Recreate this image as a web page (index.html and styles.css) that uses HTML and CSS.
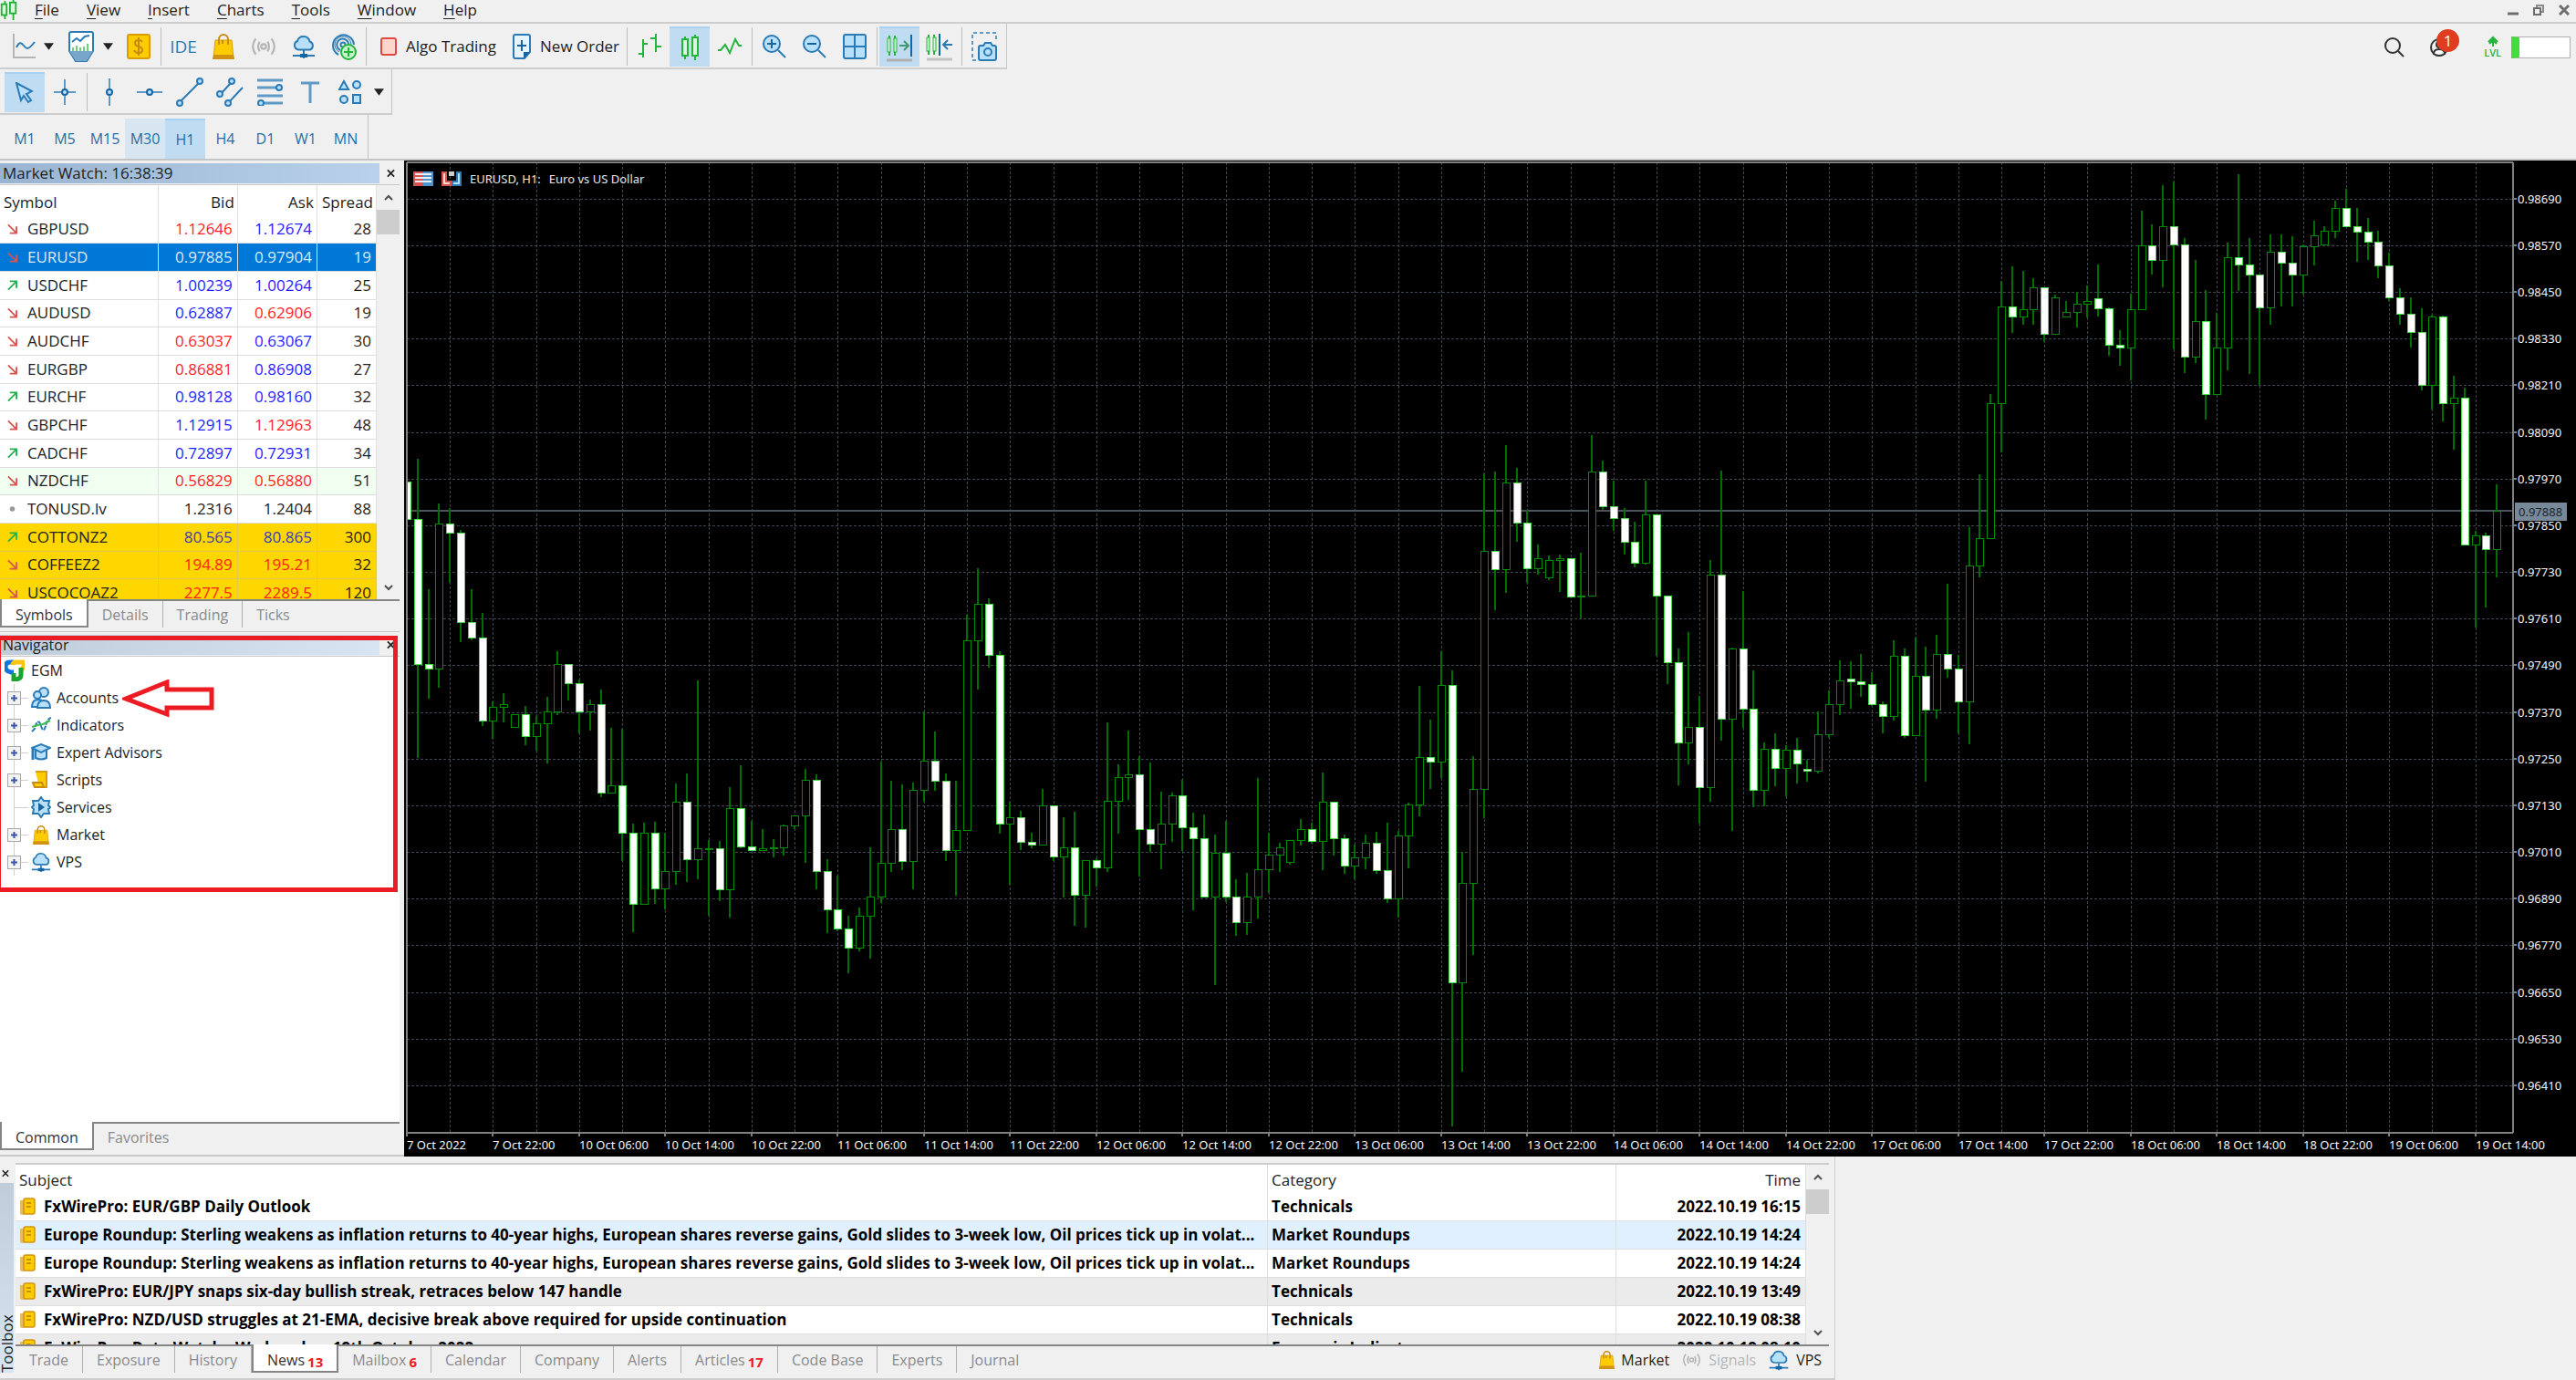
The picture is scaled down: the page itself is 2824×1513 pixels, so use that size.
FILE: index.html
```html
<!DOCTYPE html>
<html lang="en">
<head>
  <meta charset="UTF-8" />
  <meta name="viewport" content="width=device-width, initial-scale=1.0" />
  <title>EURUSD, H1</title>
  <link rel="stylesheet" href="styles.css">
</head>
<body>
  <!-- Shared icons -->
  <svg class="sprite" aria-hidden="true">
    <symbol id="i-bag" viewBox="0 0 24 28">
      <path d="M7 10V6a5 5 0 0 1 10 0v4" fill="none" stroke="#c98a10" stroke-width="2"/>
      <path d="M3 7h18l2 20H1z" fill="#fccb00" stroke="#d99c0a" stroke-width="1"/>
      <path d="M1 23h22l1 5H0z" fill="#d29314"/>
      <path d="M7 7v5M11 7v4M17 7v5" stroke="#c98a10" stroke-width="2"/>
    </symbol>
    <symbol id="i-cloud" viewBox="0 0 26 28">
      <path d="M7 17.500a5 5 0 0 1-1-9.500A7 7 0 0 1 19.500 8.500 4.800 4.800 0 0 1 20 17.500z" fill="#b9e0fb" stroke="#2a7ab5" stroke-width="2"/>
      <path d="M13 18v9M1 24h24" stroke="#2a7ab5" stroke-width="2"/>
      <path d="M9 24h8" stroke="#1565a5" stroke-width="4"/>
    </symbol>
    <symbol id="i-signal" viewBox="0 0 26 20">
      <g fill="none" stroke="#b4b4b4" stroke-width="2">
        <circle cx="13" cy="10" r="2.500"/>
        <path d="M9 5q-3 5 0 10M17 5q3 5 0 10M5 2q-6 8 0 16M21 2q6 8 0 16"/>
      </g>
    </symbol>
    <symbol id="i-down" viewBox="0 0 12 12">
      <path d="M1 1l9 9M11 3v8H3" fill="none" stroke="#d9534f" stroke-width="2"/>
    </symbol>
    <symbol id="i-up" viewBox="0 0 12 12">
      <path d="M1 11l9-9M3 1h8v8" fill="none" stroke="#22b14c" stroke-width="2"/>
    </symbol>
    <symbol id="i-dot" viewBox="0 0 12 12"><circle cx="6" cy="6" r="3" fill="#999"/></symbol>
    <symbol id="i-news" viewBox="0 0 18 20">
      <path d="M1 3h5v16H3a2 2 0 0 1-2-2z" fill="#e3bb62"/>
      <rect x="5" y="1" width="12" height="17" rx="2" fill="#fccb00" stroke="#d29314" stroke-width="1.500"/>
      <path d="M8 6h5M8 10h5" stroke="#b57f10" stroke-width="1.500"/>
    </symbol>
    <symbol id="i-close" viewBox="0 0 10 10"><path d="M1 1l8 8M9 1L1 9" stroke="#222" stroke-width="2"/></symbol>
    <symbol id="i-plus" viewBox="0 0 23 15">
      <rect x=".5" y=".5" width="14" height="14" fill="#f3f3f3" stroke="#a8a8a8"/>
      <path d="M4 7.500h7M7.500 4v7" stroke="#3a55a8" stroke-width="2"/>
      <path d="M15 7.500h8" stroke="#d0d0d0"/>
    </symbol>
    <symbol id="i-branch" viewBox="0 0 23 15"><path d="M8 7.500h15" stroke="#d0d0d0"/></symbol>
    <symbol id="i-chev-up" viewBox="0 0 10 8"><path d="M1 6l4-4 4 4" fill="none" stroke="#505050" stroke-width="2"/></symbol>
    <symbol id="i-chev-down" viewBox="0 0 10 8"><path d="M1 2l4 4 4-4" fill="none" stroke="#505050" stroke-width="2"/></symbol>
    <symbol id="i-caret" viewBox="0 0 12 8"><path d="M0 0h12L6 8z" fill="#222"/></symbol>
  </svg>

  <div class="terminal">
    <header class="menubar">
      <svg class="app-logo" viewBox="0 0 20 24"><g fill="#dcf5dc" stroke="#1eb432" stroke-width="2"><path d="M5 1v22M15 0v24"/><rect x="1" y="5" width="6" height="13"/><rect x="11" y="3" width="7" height="13"/></g></svg>
      <nav class="menu">
        <a href="#file"><u>F</u>ile</a>
        <a href="#view"><u>V</u>iew</a>
        <a href="#insert"><u>I</u>nsert</a>
        <a href="#charts"><u>C</u>harts</a>
        <a href="#tools"><u>T</u>ools</a>
        <a href="#window"><u>W</u>indow</a>
        <a href="#help"><u>H</u>elp</a>
      </nav>
      <div class="window-buttons">
        <button aria-label="Minimize"><svg width="12" height="12"><path d="M0 10h12" stroke="#6e6e6e" stroke-width="3"/></svg></button>
        <button aria-label="Restore"><svg width="12" height="12"><path d="M4 3V1h7v7H9" fill="none" stroke="#8a8a8a" stroke-width="2"/><rect x="1" y="4" width="7" height="7" fill="none" stroke="#6e6e6e" stroke-width="2"/></svg></button>
        <button aria-label="Close"><svg width="12" height="12"><path d="M1 1l10 10M11 1L1 11" stroke="#6e6e6e" stroke-width="3"/></svg></button>
      </div>
    </header>

    <div class="toolbar-row">
      <div class="toolbar">
        <button class="tool wide first" aria-label="New chart">
          <svg width="28" height="30"><path d="M2 1v26h24" fill="none" stroke="#b4b4b4" stroke-width="2"/><path d="M5 16c3-6 5-6 8-2s5 5 12-4" fill="none" stroke="#2a7ab5" stroke-width="2"/></svg>
          <svg class="caret"><use href="#i-caret"/></svg>
        </button>
        <button class="tool wide" aria-label="Profiles">
          <svg width="30" height="34"><path d="M2 3q0-2 2-2h22q2 0 2 2v19l-7 11H9L2 22z" fill="#fff" stroke="#2a7ab5" stroke-width="2"/><path d="M2 22h26l-7 11H9z" fill="#78a5ca"/><path d="M5 12l5-4 4 3 5-5 5-1" fill="none" stroke="#2a7ab5" stroke-width="2"/><path d="M6 22v-4M10 22v-6M14 22v-4M18 22v-5M22 22v-8" stroke="#6fcf7c" stroke-width="2"/></svg>
          <svg class="caret"><use href="#i-caret"/></svg>
        </button>
        <button class="tool" aria-label="Market watch">
          <svg width="28" height="30"><rect x="2" y="2" width="24" height="26" rx="2" fill="#fccb00" stroke="#d99c0a" stroke-width="2"/><path d="M18 10q-1-2-4-2-4 0-4 3t4 4 4 4-4 3q-4 0-5-3M14 5v20" fill="none" stroke="#c98a10" stroke-width="2"/></svg>
        </button>
        <span class="sep"></span>
        <button class="tool ide">IDE</button>
        <button class="tool" aria-label="Market"><svg width="24" height="28"><use href="#i-bag"/></svg></button>
        <button class="tool" aria-label="Signals"><svg width="28" height="22"><use href="#i-signal"/></svg></button>
        <button class="tool" aria-label="VPS"><svg width="26" height="28"><use href="#i-cloud"/></svg></button>
        <button class="tool" aria-label="Connect">
          <svg width="30" height="32"><g fill="none" stroke="#2a7ab5" stroke-width="2"><circle cx="14" cy="14" r="2.500"/><path d="M11 20a6.500 6.500 0 1 1 9-4M9 25A11.500 11.500 0 1 1 26 14" /><path d="M10 22a9 9 0 1 1 13-8" stroke-width="1"/></g><circle cx="20" cy="22" r="8" fill="#c6f5cc" stroke="#22b53a" stroke-width="2"/><path d="M20 17v10M15 22h10" stroke="#22b53a" stroke-width="2"/></svg>
        </button>
        <span class="sep"></span>
        <button class="tool labelled"><svg width="18" height="20"><rect x="1" y="1" width="16" height="18" rx="2" fill="#ffd5cc" stroke="#dc4a41" stroke-width="2"/></svg>Algo Trading</button>
        <button class="tool labelled"><svg width="20" height="30"><path d="M3 2h14q2 0 2 2v17l-6 7H3q-2 0-2-2V4q0-2 2-2z" fill="#e6f4ff" stroke="#2a7ab5" stroke-width="2"/><path d="M12 28v-7h7z" fill="#1565a5"/><path d="M10 8v12M5 14h10" stroke="#1565a5" stroke-width="2"/></svg>New Order</button>
        <span class="sep"></span>
        <button class="tool" aria-label="Bar chart"><svg width="28" height="30"><path d="M7 7v20M7 12h5M2 23h5M21 1v20M15 6h6M21 15h6" stroke="#22b53a" stroke-width="2" fill="none"/></svg></button>
        <button class="tool active" aria-label="Candlesticks"><svg width="22" height="30"><g fill="#d6fadb" stroke="#22b53a" stroke-width="2"><path d="M6 3v25M17 1v28"/><rect x="3" y="6" width="6" height="18"/><rect x="14" y="4" width="6" height="20"/></g></svg></button>
        <button class="tool" aria-label="Line chart"><svg width="28" height="20"><path d="M1 14h3l5-6 5 9 6-15 4 7h3" fill="none" stroke="#22b53a" stroke-width="2"/></svg></button>
        <span class="sep"></span>
        <button class="tool" aria-label="Zoom in"><svg width="28" height="30"><circle cx="11" cy="12" r="9" fill="#b9e0fb" stroke="#2a7ab5" stroke-width="2"/><path d="M18 19l8 8" stroke="#2a7ab5" stroke-width="2"/><path d="M6 12h10M11 7v10" stroke="#1565a5" stroke-width="2"/></svg></button>
        <button class="tool" aria-label="Zoom out"><svg width="28" height="30"><circle cx="11" cy="12" r="9" fill="#b9e0fb" stroke="#2a7ab5" stroke-width="2"/><path d="M18 19l8 8" stroke="#2a7ab5" stroke-width="2"/><path d="M6 12h10" stroke="#1565a5" stroke-width="2"/></svg></button>
        <button class="tool" aria-label="Tile windows"><svg width="26" height="30"><rect x="1" y="2" width="24" height="26" rx="2" fill="#b9e0fb" stroke="#2a7ab5" stroke-width="2"/><path d="M13 2v26M1 15h24" stroke="#2a7ab5" stroke-width="2"/></svg></button>
        <span class="sep"></span>
        <button class="tool active" aria-label="Auto scroll"><svg width="30" height="32"><g fill="#d6fadb" stroke="#22b53a"><path d="M4 3v22M10 3v22" stroke-width="2"/><rect x="2" y="6" width="3" height="15"/><rect x="9" y="6" width="3" height="15"/></g><path d="M15 14h10M20 9l5 5-5 5" fill="none" stroke="#3f9a6e" stroke-width="2"/><path d="M28 2v24" stroke="#1565a5" stroke-width="2"/><path d="M1 30h28" stroke="#b0b0b0" stroke-width="3"/></svg></button>
        <button class="tool" aria-label="Chart shift"><svg width="30" height="32"><g fill="#d6fadb" stroke="#22b53a"><path d="M3 3v22M9 3v22" stroke-width="2"/><rect x="1" y="6" width="3" height="15"/><rect x="8" y="6" width="3" height="15"/></g><path d="M29 14H20M24 9l-5 5 5 5" fill="none" stroke="#2a7ab5" stroke-width="2"/><path d="M15 2v24" stroke="#1565a5" stroke-width="2"/><path d="M1 30h28" stroke="#c4c4c4" stroke-width="3"/></svg></button>
        <span class="sep"></span>
        <button class="tool" aria-label="Screenshot"><svg width="30" height="34"><path d="M6 32H2V2h26v10" fill="none" stroke="#5f9ac6" stroke-width="2" stroke-dasharray="4 3"/><path d="M9 18q0-2 2-2h3l2-3h6l2 3h2q2 0 2 2v12q0 2-2 2H11q-2 0-2-2z" fill="#b9e0fb" stroke="#2a7ab5" stroke-width="2"/><circle cx="19" cy="23" r="4" fill="none" stroke="#2a7ab5" stroke-width="2"/></svg></button>
      </div>
      <div class="status">
        <button class="status-button" aria-label="Search"><svg width="22" height="22"><circle cx="9" cy="9" r="8" fill="none" stroke="#333" stroke-width="2"/><path d="M15 15l6 6" stroke="#333" stroke-width="2"/></svg></button>
        <button class="status-button account" aria-label="Account"><svg width="22" height="22"><circle cx="11" cy="11" r="9" fill="none" stroke="#333" stroke-width="2"/><circle cx="11" cy="8" r="3" fill="none" stroke="#333" stroke-width="2"/><path d="M5 18q0-5 6-5t6 5q-6 4-12 0z" fill="#fff" stroke="#333" stroke-width="2"/></svg><span class="badge">1</span></button>
        <div class="level"><svg width="14" height="12"><path d="M7 12V2M2 7l5-5 5 5M3 9l4-4 4 4" fill="none" stroke="#22b53a" stroke-width="2"/></svg><span>LVL</span></div>
        <div class="traffic"></div>
      </div>
    </div>

    <div class="toolbar-row second">
      <div class="toolbar inset">
        <button class="tool active" aria-label="Cursor"><svg width="20" height="24"><path d="M1 1l17 9-6 3 5 7-3 2-5-7-3 5z" fill="#b9e0fb" stroke="#2a7ab5" stroke-width="2"/></svg></button>
        <button class="tool" aria-label="Crosshair"><svg width="26" height="30"><path d="M13 1v28M1 15h24" stroke="#5f9ac6" stroke-width="2"/><circle cx="13" cy="15" r="3" fill="#b9e0fb" stroke="#1565a5" stroke-width="2"/></svg></button>
        <span class="sep"></span>
        <button class="tool" aria-label="Vertical line"><svg width="26" height="30"><path d="M13 0v30" stroke="#5f9ac6" stroke-width="2"/><circle cx="13" cy="15" r="3" fill="#b9e0fb" stroke="#1565a5" stroke-width="2"/></svg></button>
        <button class="tool" aria-label="Horizontal line"><svg width="28" height="30"><path d="M0 15h28" stroke="#5f9ac6" stroke-width="2"/><circle cx="14" cy="15" r="3" fill="#b9e0fb" stroke="#1565a5" stroke-width="2"/></svg></button>
        <button class="tool" aria-label="Trendline"><svg width="32" height="32"><path d="M5 27L27 5" stroke="#2a7ab5" stroke-width="2"/><g fill="#b9e0fb" stroke="#2a7ab5" stroke-width="2"><circle cx="5" cy="28" r="3"/><circle cx="27" cy="4" r="3"/></g></svg></button>
        <button class="tool" aria-label="Equidistant channel"><svg width="30" height="32"><path d="M4 19L17 5M13 28L29 11" stroke="#2a7ab5" stroke-width="2"/><g fill="#b9e0fb" stroke="#2a7ab5" stroke-width="2"><circle cx="4" cy="18" r="3"/><circle cx="17" cy="4" r="3"/><circle cx="13" cy="28" r="3"/></g></svg></button>
        <button class="tool" aria-label="Fibonacci retracement"><svg width="28" height="30"><path d="M0 2h28M0 10h24M0 19h28M4 27h24" stroke="#5f9ac6" stroke-width="3"/><g fill="#b9e0fb" stroke="#2a7ab5" stroke-width="2"><circle cx="24" cy="10" r="3"/><circle cx="4" cy="27" r="3"/></g></svg></button>
        <button class="tool" aria-label="Text"><svg width="20" height="24"><path d="M0 2h20M10 2v22" stroke="#5f9ac6" stroke-width="3"/></svg></button>
        <button class="tool wide" aria-label="Objects"><svg width="26" height="28"><g fill="#b9e0fb" stroke="#2a7ab5" stroke-width="2"><path d="M6 2l5 9H1z"/><circle cx="20" cy="6" r="4"/><circle cx="6" cy="22" r="4"/><rect x="16" y="17" width="8" height="9"/></g></svg><svg class="caret"><use href="#i-caret"/></svg></button>
      </div>
    </div>

    <div class="toolbar-row third">
      <div class="toolbar inset">
        <button class="tool period">M1</button>
        <button class="tool period">M5</button>
        <button class="tool period">M15</button>
        <button class="tool period hover">M30</button>
        <button class="tool period active">H1</button>
        <button class="tool period">H4</button>
        <button class="tool period">D1</button>
        <button class="tool period">W1</button>
        <button class="tool period">MN</button>
      </div>
    </div>

    <main class="workspace">
      <aside class="sidebar">
        <section class="panel market-watch">
          <div class="panel-title">
            <h2>Market Watch: 16:38:39</h2>
            <button class="close" aria-label="Close Market Watch"><svg width="9" height="10"><use href="#i-close"/></svg></button>
          </div>
          <div class="panel-body">
            <div class="table-clip">
              <table class="quotes">
                <thead>
                  <tr><th class="symbol">Symbol</th><th>Bid</th><th>Ask</th><th class="spread">Spread</th></tr>
                </thead>
                <tbody>
                  <tr><td><svg><use href="#i-down"/></svg>GBPUSD</td><td class="down">1.12646</td><td class="up">1.12674</td><td>28</td></tr>
                  <tr class="selected"><td><svg><use href="#i-down"/></svg>EURUSD</td><td>0.97885</td><td>0.97904</td><td>19</td></tr>
                  <tr><td><svg><use href="#i-up"/></svg>USDCHF</td><td class="up">1.00239</td><td class="up">1.00264</td><td>25</td></tr>
                  <tr><td><svg><use href="#i-down"/></svg>AUDUSD</td><td class="up">0.62887</td><td class="down">0.62906</td><td>19</td></tr>
                  <tr><td><svg><use href="#i-down"/></svg>AUDCHF</td><td class="down">0.63037</td><td class="up">0.63067</td><td>30</td></tr>
                  <tr><td><svg><use href="#i-down"/></svg>EURGBP</td><td class="down">0.86881</td><td class="up">0.86908</td><td>27</td></tr>
                  <tr><td><svg><use href="#i-up"/></svg>EURCHF</td><td class="up">0.98128</td><td class="up">0.98160</td><td>32</td></tr>
                  <tr><td><svg><use href="#i-down"/></svg>GBPCHF</td><td class="up">1.12915</td><td class="down">1.12963</td><td>48</td></tr>
                  <tr><td><svg><use href="#i-up"/></svg>CADCHF</td><td class="up">0.72897</td><td class="up">0.72931</td><td>34</td></tr>
                  <tr class="mint"><td><svg><use href="#i-down"/></svg>NZDCHF</td><td class="down">0.56829</td><td class="down">0.56880</td><td>51</td></tr>
                  <tr><td><svg><use href="#i-dot"/></svg>TONUSD.lv</td><td>1.2316</td><td>1.2404</td><td>88</td></tr>
                  <tr class="gold"><td><svg><use href="#i-up"/></svg>COTTONZ2</td><td class="up">80.565</td><td class="up">80.865</td><td>300</td></tr>
                  <tr class="gold"><td><svg><use href="#i-down"/></svg>COFFEEZ2</td><td class="down">194.89</td><td class="down">195.21</td><td>32</td></tr>
                  <tr class="gold"><td><svg><use href="#i-down"/></svg>USCOCOAZ2</td><td class="down">2277.5</td><td class="down">2289.5</td><td>120</td></tr>
                </tbody>
              </table>
            </div>
            <div class="scrollbar">
              <button aria-label="Scroll up"><svg width="10" height="8"><use href="#i-chev-up"/></svg></button>
              <span class="thumb"></span>
              <button class="end" aria-label="Scroll down"><svg width="10" height="8"><use href="#i-chev-down"/></svg></button>
            </div>
          </div>
          <div class="tabs">
            <button class="tab current">Symbols</button>
            <button class="tab">Details</button>
            <button class="tab">Trading</button>
            <button class="tab">Ticks</button>
          </div>
        </section>

        <section class="panel navigator">
          <div class="panel-title pale">
            <h2>Navigator</h2>
            <button class="close" aria-label="Close Navigator"><svg width="9" height="10"><use href="#i-close"/></svg></button>
          </div>
          <div class="tree">
            <div class="root">
              <svg width="22" height="24"><path d="M10 3H6Q1 3 1 8t6 6h3" fill="none" stroke="#0f74dc" stroke-width="5"/><path d="M9 6q0-3 4-3h8v4q0 4-5 5" fill="none" stroke="#f9c510" stroke-width="5"/><path d="M18 9v8q0 5-8 5v-7" fill="none" stroke="#17a52d" stroke-width="5"/></svg>
              EGM
            </div>
            <ul>
              <li><svg class="plus"><use href="#i-plus"/></svg><svg class="node" viewBox="0 0 22 24"><g fill="#b9e0fb" stroke="#2a7ab5" stroke-width="2"><circle cx="14" cy="6" r="5"/><circle cx="7" cy="9" r="4"/><path d="M1 22q0-8 7-8t5 8z"/><path d="M7 23q0-8 7-8t7 8z"/></g></svg>Accounts</li>
              <li><svg class="plus"><use href="#i-plus"/></svg><svg class="node" viewBox="0 0 22 24"><path d="M1 19l3-3c2-9 5-10 7-3s4 4 5 0 2-8 6-9" fill="none" stroke="#2a7ab5" stroke-width="2" stroke-dasharray="5 1"/><path d="M1 14l6-2 6-1 8-4" fill="none" stroke="#3bbf50" stroke-width="2"/></svg>Indicators</li>
              <li><svg class="plus"><use href="#i-plus"/></svg><svg class="node" viewBox="0 0 22 24"><g fill="#b9e0fb" stroke="#2a7ab5" stroke-width="2"><path d="M5 9v9q6 3 12 0V9"/><path d="M1 7l10-4 10 4-10 5z"/></g><path d="M2 8v12" stroke="#2a7ab5" stroke-width="3"/></svg>Expert Advisors</li>
              <li><svg class="plus"><use href="#i-plus"/></svg><svg class="node" viewBox="0 0 22 24"><path d="M5 3h12v17H9" fill="#fccb00" stroke="#d99c0a" stroke-width="2"/><path d="M2 15h10l2 5H4z" fill="#fccb00" stroke="#c98a10" stroke-width="2"/></svg>Scripts</li>
              <li><svg class="plus"><use href="#i-branch"/></svg><svg class="node" viewBox="0 0 22 24"><path d="M11 1l3 4 6 0-1 5 2 2-2 2 1 5-6 0-3 4-3-4-6 0 1-5-2-2 2-2-1-5 6 0z" fill="#b9e0fb" stroke="#2a7ab5" stroke-width="2"/><path d="M8 7l7 5-7 5z" fill="#1565a5"/></svg>Services</li>
              <li><svg class="plus"><use href="#i-plus"/></svg><svg class="node small"><use href="#i-bag"/></svg>Market</li>
              <li><svg class="plus"><use href="#i-plus"/></svg><svg class="node"><use href="#i-cloud"/></svg>VPS</li>
            </ul>
          </div>
          <div class="tabs">
            <button class="tab current">Common</button>
            <button class="tab">Favorites</button>
          </div>
          <div class="highlight"></div>
          <svg class="pointer" width="102" height="42"><path d="M4 21L49 3V11H98V31H49V38z" fill="#fff" stroke="#ed1c24" stroke-width="5"/></svg>
        </section>
      </aside>

      <section class="chart-window">
        <svg id="chart" role="img" aria-label="EURUSD hourly candles"></svg>
        <div class="chart-title">
          <svg width="22" height="16"><rect width="11" height="16" fill="#d9534f"/><rect x="11" width="11" height="16" fill="#4d94cf"/><path d="M2 3h18M2 7h18M2 11h18" stroke="#e8eef4" stroke-width="2"/></svg>
          <svg width="22" height="16"><path d="M0 0h6v10h5v6H0z" fill="#d9534f"/><path d="M22 0h-6v10h-5v6h11z" fill="#2a7ab5"/><path d="M2 2h2v10h5v2H2z" fill="#ffd5cc"/><path d="M20 2h-2v10h-5v2h7z" fill="#b9e0fb"/><path d="M8 0h6v5H8z" fill="#ccc"/></svg>
          <span>EURUSD, H1:</span>
          <span>Euro vs US Dollar</span>
        </div>
      </section>
    </main>

    <section class="toolbox">
      <div class="toolbox-side">
        <button class="close" aria-label="Close Toolbox"><svg width="8" height="9"><use href="#i-close"/></svg></button>
        <div class="toolbox-name">Toolbox</div>
      </div>
      <div class="toolbox-main">
        <div class="panel-body">
          <div class="table-clip">
            <table class="news">
              <thead>
                <tr><th>Subject</th><th class="category">Category</th><th class="time">Time</th></tr>
              </thead>
              <tbody>
                <tr><td><svg><use href="#i-news"/></svg>FxWirePro: EUR/GBP Daily Outlook</td><td>Technicals</td><td>2022.10.19 16:15</td></tr>
                <tr class="picked"><td><svg><use href="#i-news"/></svg>Europe Roundup: Sterling weakens as inflation returns to 40-year highs, European shares reverse gains, Gold slides to 3-week low, Oil prices tick up in volat...</td><td>Market Roundups</td><td>2022.10.19 14:24</td></tr>
                <tr><td><svg><use href="#i-news"/></svg>Europe Roundup: Sterling weakens as inflation returns to 40-year highs, European shares reverse gains, Gold slides to 3-week low, Oil prices tick up in volat...</td><td>Market Roundups</td><td>2022.10.19 14:24</td></tr>
                <tr class="shade"><td><svg><use href="#i-news"/></svg>FxWirePro: EUR/JPY snaps six-day bullish streak, retraces below 147 handle</td><td>Technicals</td><td>2022.10.19 13:49</td></tr>
                <tr><td><svg><use href="#i-news"/></svg>FxWirePro: NZD/USD struggles at 21-EMA, decisive break above required for upside continuation</td><td>Technicals</td><td>2022.10.19 08:38</td></tr>
                <tr class="shade"><td><svg><use href="#i-news"/></svg>FxWirePro: Data Watch - Wednesday, 19th October 2022</td><td>Economic Indicators</td><td>2022.10.19 08:10</td></tr>
              </tbody>
            </table>
          </div>
          <div class="scrollbar">
            <button aria-label="Scroll up"><svg width="10" height="8"><use href="#i-chev-up"/></svg></button>
            <span class="thumb"></span>
            <button class="end" aria-label="Scroll down"><svg width="10" height="8"><use href="#i-chev-down"/></svg></button>
          </div>
        </div>
        <div class="tabs">
          <button class="tab">Trade</button>
          <button class="tab">Exposure</button>
          <button class="tab">History</button>
          <button class="tab current">News<sub>13</sub></button>
          <button class="tab">Mailbox<sub>6</sub></button>
          <button class="tab">Calendar</button>
          <button class="tab">Company</button>
          <button class="tab">Alerts</button>
          <button class="tab">Articles<sub>17</sub></button>
          <button class="tab">Code Base</button>
          <button class="tab">Experts</button>
          <button class="tab">Journal</button>
          <div class="services">
            <a href="#market"><svg width="17" height="20"><use href="#i-bag"/></svg>Market</a>
            <a href="#signals" class="off"><svg width="23" height="16"><use href="#i-signal"/></svg>Signals</a>
            <a href="#vps"><svg width="24" height="24"><use href="#i-cloud"/></svg>VPS</a>
          </div>
        </div>
      </div>
    </section>
  </div>
  <script src="chart.js"></script>
</body>
</html>
```
FILE: styles.css
```css
* {
  margin: 0;
  padding: 0;
  box-sizing: border-box;
}
body {
  background: #f0f0f0;
  color: #222;
  font-family: "Open Sans", "Noto Sans", sans-serif;
  font-size: 17px;
  line-height: 24px;
}
button {
  font: inherit;
  color: inherit;
  background: none;
  border: none;
  cursor: pointer;
}
a {
  color: inherit;
  text-decoration: none;
}
svg {
  display: block;
  flex: none;
}
.sprite {
  position: absolute;
  width: 0;
  height: 0;
}
.terminal {
  display: flex;
  flex-direction: column;
  height: 100vh;
  overflow: hidden;
}
/* Menu */
.menubar {
  display: flex;
  align-items: center;
  height: 26px;
  padding-bottom: 2px;
  border-bottom: 2px solid #cdcdcd;
}
.app-logo {
  width: 20px;
  height: 22px;
}
.menu {
  display: flex;
  gap: 30px;
  margin-left: 18px;
}
.menu u {
  text-underline-offset: 3px;
}
.window-buttons {
  display: flex;
  gap: 16px;
  margin-left: auto;
  padding-right: 7px;
}
/* Toolbars */
.toolbar-row {
  display: flex;
  justify-content: space-between;
  height: 50px;
}
.toolbar {
  display: flex;
  align-items: center;
  padding: 2px 2px 0 0;
  border-right: 1px solid #c4c4c4;
  border-bottom: 2px solid #cdcdcd;
}
.toolbar.inset {
  padding-left: 5px;
}
.third {
  border-bottom: 2px solid #c4c4c4;
}
.third .toolbar {
  padding-top: 4px;
  border-bottom: none;
}
.tool {
  display: flex;
  align-items: center;
  justify-content: center;
  width: 44px;
  height: 44px;
}
.tool.wide {
  width: 65px;
  justify-content: space-between;
  padding: 0 6px 0 9px;
}
.tool.first {
  padding-left: 13px;
}
.tool.labelled {
  width: auto;
  gap: 10px;
  padding: 0 8px 0 13px;
}
.tool.labelled + .tool.labelled {
  padding: 0 6px 0 10px;
}
.tool.active {
  background: #c0dcf3;
  border-top: 2px solid #a9d1f2;
}
.tool.hover {
  background: #d8e6f1;
}
.tool.ide {
  color: #2a7ab5;
  font-size: 19px;
}
.tool.period {
  color: #1f6ea8;
  font-size: 16px;
}
.caret {
  width: 11px;
  height: 8px;
}
.sep {
  width: 1px;
  height: 42px;
  margin: 0 2px;
  background: #bdbdbd;
}
.status {
  display: flex;
  align-items: center;
  padding: 2px 6px 0 0;
}
.status-button {
  position: relative;
  margin-right: 27px;
}
.account {
  margin-right: 38px;
}
.badge {
  position: absolute;
  top: -9px;
  left: 8px;
  width: 25px;
  height: 25px;
  border-radius: 50%;
  background: #e03c20;
  color: #fff;
  line-height: 25px;
}
.level {
  display: flex;
  flex-direction: column;
  align-items: center;
  margin-right: 11px;
  color: #22b53a;
  font-size: 11px;
  line-height: 14px;
  font-weight: 600;
}
.traffic {
  width: 65px;
  height: 24px;
  background: #fff;
  border: 1px solid #b0b0b0;
  border-left: 9px solid #40dc40;
}
/* Workspace */
.workspace {
  display: flex;
  flex: 1;
  min-height: 0;
}
.sidebar {
  display: flex;
  flex-direction: column;
  width: 443px;
  padding: 3px 5px 0 0;
  border-bottom: 2px solid #c8c8c8;
}
.panel {
  display: flex;
  flex-direction: column;
}
.market-watch {
  height: 514px;
  padding-bottom: 4px;
  border-bottom: 1px solid #c8c8c8;
}
.panel-title {
  display: flex;
  align-items: center;
  height: 24px;
  padding-bottom: 1px;
  border-bottom: 1px solid #c8c8c8;
}
.panel-title h2 {
  flex: 1;
  padding-left: 3px;
  background: linear-gradient(90deg, #99b4d1, #b9d1ea);
  font-size: 17px;
  font-weight: 400;
  line-height: 22px;
}
.panel-title.pale h2 {
  background: linear-gradient(90deg, #bfcddb, #d7e4f2);
  font-size: 16px;
}
.panel-title .close {
  width: 22px;
  padding-left: 8px;
}
.panel-body {
  display: flex;
  flex: 1;
  min-height: 0;
}
.table-clip {
  flex: 1;
  overflow: hidden;
  background: #fff;
}
table {
  width: 100%;
  border-collapse: collapse;
  table-layout: fixed;
}
th {
  height: 33px;
  padding-top: 4px;
  font-weight: 400;
}
td {
  height: 30px;
}
.quotes {
  height: 463px;
}
.quotes th,
.quotes td {
  padding-right: 5px;
  text-align: right;
  border-right: 1px solid #e0e0e0;
  border-bottom: 1px solid #dedede;
}
.quotes th {
  width: 87px;
  padding-right: 3px;
  border-bottom: none;
}
.quotes .symbol {
  width: 173px;
}
.quotes .spread {
  width: 65px;
}
.quotes th:first-child,
.quotes td:first-child {
  padding-left: 4px;
  text-align: left;
}
.quotes td svg {
  display: inline-block;
  width: 11px;
  height: 12px;
  margin: 0 11px 0 4px;
}
.quotes .up {
  color: #1e1eff;
}
.quotes .down {
  color: #ff1e1e;
}
.quotes .selected {
  background: #0078d7;
  color: #dcebf8;
}
.quotes .mint {
  background: #f0fff0;
}
.quotes .gold {
  background: #ffd700;
}
.quotes .gold td {
  border-color: #e3c650;
}
.quotes .gold .up {
  color: #3c3cb4;
}
.scrollbar {
  display: flex;
  flex-direction: column;
  width: 25px;
  background: #f0f0f0;
}
.scrollbar button {
  display: flex;
  align-items: center;
  justify-content: center;
  height: 27px;
}
.scrollbar .thumb {
  height: 27px;
  background: #cdcdcd;
}
.scrollbar .end {
  margin-top: auto;
}
/* Tabs */
.tabs {
  display: flex;
  height: 31px;
  border-top: 2px solid #858585;
  color: #8a8a8a;
  font-size: 16px;
}
.tab {
  padding: 0 15px;
  border-right: 1px solid #b0b0b0;
}
.tab:last-of-type {
  border-right: none;
}
.tab.current {
  margin-top: -2px;
  padding-top: 4px;
  background: #fff;
  color: #333;
  border: 2px solid #858585;
  border-top: none;
}
.tab sub {
  margin-left: 3px;
  color: #ed1c24;
  font-size: 15px;
  font-weight: 700;
  line-height: 0;
  vertical-align: -2px;
}
/* Navigator */
.navigator {
  position: relative;
  flex: 1;
  min-height: 0;
  padding: 3px 0 5px;
}
.tree {
  flex: 1;
  background: #fff;
  font-size: 16px;
}
.root {
  display: flex;
  align-items: center;
  gap: 7px;
  height: 30px;
  padding-left: 5px;
}
.tree ul {
  list-style: none;
  margin-left: 15px;
}
.tree li {
  display: flex;
  align-items: center;
  height: 30px;
  border-left: 1px solid #d0d0d0;
}
.plus {
  width: 23px;
  height: 15px;
  margin: 0 3px 0 -8px;
}
.node {
  width: 22px;
  height: 24px;
  margin-right: 6px;
}
.node.small {
  height: 21px;
}
.highlight {
  position: absolute;
  top: 4px;
  left: 0;
  right: 2px;
  height: 281px;
  border: 5px solid #ed1c24;
  border-left-width: 1px;
}
.pointer {
  position: absolute;
  top: 52px;
  left: 134px;
}
/* Chart */
.chart-window {
  position: relative;
  flex: 1;
  min-width: 0;
  background: #000;
}
#chart {
  width: 100%;
  height: 100%;
  font-family: "Noto Sans", sans-serif;
  font-size: 13px;
}
.chart-title {
  position: absolute;
  top: 8px;
  left: 10px;
  display: flex;
  align-items: center;
  gap: 9px;
  color: #e8e8e8;
  font-family: "Noto Sans", sans-serif;
  font-size: 13px;
}
.grid {
  stroke: #3d4751;
  stroke-dasharray: 3 2;
}
.frame {
  stroke: #808080;
  stroke-width: 2;
}
.price-line {
  stroke: #48535e;
  stroke-width: 2;
}
.axis-label {
  fill: #f4f4f4;
}
.price-tag {
  fill: #778899;
}
.price-tag-label {
  fill: #1c242c;
}
.wick {
  fill: #006e00;
}
.bull {
  fill: #000;
  stroke: #008c00;
}
.bear {
  fill: #fff;
  stroke: #46dc46;
}
/* Toolbox */
.toolbox {
  display: flex;
  width: 71.25%;
  height: 245px;
  padding: 7px 6px 6px 0;
  border-right: 1px solid #cdcdcd;
  border-bottom: 2px solid #cdcdcd;
}
.toolbox-side {
  display: flex;
  flex-direction: column;
  width: 15px;
  margin-right: 2px;
}
.toolbox-side .close {
  height: 22px;
  padding-left: 2px;
}
.toolbox-name {
  flex: 1;
  background: linear-gradient(0deg, #bfcddb, #d7e4f2);
  font-size: 17px;
  line-height: 15px;
  writing-mode: vertical-rl;
  transform: rotate(180deg);
}
.toolbox-main {
  display: flex;
  flex-direction: column;
  flex: 1;
  min-width: 0;
  border-top: 2px solid #cdcdcd;
}
.toolbox-main .panel-body {
  overflow: hidden;
}
.news {
  height: 217px;
}
.news th,
.news td {
  padding-left: 4px;
  overflow: hidden;
  text-align: left;
  white-space: nowrap;
  border-right: 1px solid #dedede;
  border-bottom: 1px solid #dedede;
}
.news th {
  height: 31px;
  padding-top: 2px;
  border-bottom: none;
}
.news td {
  color: #000;
  font-weight: 700;
}
.news .category {
  width: 382px;
}
.news .time {
  width: 208px;
}
.news th:last-child,
.news td:last-child {
  padding-right: 5px;
  text-align: right;
}
.news td svg {
  display: inline-block;
  width: 18px;
  height: 20px;
  margin-right: 9px;
  vertical-align: -4px;
}
.news .picked {
  background: #e0f0fe;
}
.news .shade {
  background: #ebebeb;
}
.services {
  display: flex;
  align-items: center;
  gap: 13px;
  margin-left: auto;
  padding-right: 8px;
  color: #222;
}
.services a {
  display: flex;
  align-items: center;
  gap: 7px;
}
.services .off {
  color: #b4b4b4;
}
```
FILE: chart.js
```js
// EURUSD H1 in points above 0.96000: [high, low, close, open]
// open is left out when it equals the previous close
const candles = [
  [1963, 1860, 1866, 1963], [2021, 1252, 1494], [1685, 1405, 1481], [1906, 1433, 1855], [1894, 1702, 1832],
  [1837, 1549, 1601], [1685, 1554, 1562], [1624, 1335, 1348], [1397, 1302, 1384], [1419, 1343, 1391],
  [1364, 1331, 1364, 1331], [1386, 1284, 1308], [1359, 1270, 1340], [1409, 1237, 1371], [1527, 1361, 1494],
  [1494, 1400, 1445], [1453, 1315, 1371], [1402, 1321, 1391], [1427, 1152, 1163], [1328, 1163, 1181],
  [1326, 987, 1060], [1083, 805, 877], [1086, 877, 1060], [1088, 877, 917], [1060, 862, 961],
  [1185, 926, 1140], [1211, 933, 991], [1451, 940, 1019], [1040, 846, 1020], [1038, 884, 913],
  [1177, 842, 1122], [1233, 1019, 1025], [1091, 1012, 1015], [1070, 1013, 1020], [1042, 995, 1022],
  [1081, 1002, 1078], [1104, 1070, 1104], [1223, 981, 1196], [1209, 913, 961], [991, 801, 862],
  [949, 806, 813], [846, 698, 765], [867, 754, 847], [1022, 737, 895], [1242, 880, 982],
  [1193, 959, 1070], [1183, 964, 986], [1188, 913, 1170], [1372, 1139, 1244], [1320, 1167, 1193],
  [1211, 986, 1014], [1193, 898, 1066], [1621, 1063, 1554], [1740, 1427, 1649], [1662, 1483, 1516],
  [1526, 1056, 1083], [1139, 926, 1099], [1116, 1014, 1037], [1060, 1020, 1030], [1172, 1030, 1130],
  [1130, 986, 999], [1099, 893, 1022], [1114, 821, 900], [989, 816, 989], [994, 920, 971],
  [1343, 959, 1142], [1236, 1056, 1203], [1321, 1145, 1210], [1257, 947, 1070], [1239, 1010, 1032],
  [1165, 965, 1083], [1163, 1037, 1155], [1195, 1012, 1073], [1111, 861, 1046], [1106, 895, 895],
  [1054, 669, 1008], [1089, 881, 895], [939, 794, 829], [956, 796, 895], [1200, 838, 965],
  [1060, 904, 1004], [1034, 958, 1023], [1041, 978, 1041, 985], [1094, 1027, 1070], [1085, 1032, 1038],
  [1214, 963, 1139], [1139, 1001, 1045], [1054, 954, 976], [1029, 939, 997], [1054, 965, 1034],
  [1062, 954, 964], [1085, 879, 890], [1064, 842, 1053], [1137, 969, 1132], [1437, 1102, 1254],
  [1351, 1171, 1243], [1527, 1201, 1439], [1476, 305, 674], [1011, 445, 930], [1256, 745, 1172],
  [1984, 1096, 1783], [1987, 1632, 1737], [2056, 1676, 1961], [1997, 1808, 1857], [1890, 1702, 1739],
  [1800, 1724, 1766], [1773, 1709, 1760, 1717], [1775, 1678, 1766], [1766, 1666, 1666], [1779, 1610, 1670],
  [2082, 1668, 1989], [2016, 1889, 1898], [1964, 1836, 1869], [1894, 1775, 1808], [1859, 1741, 1754],
  [1964, 1748, 1878], [1878, 1515, 1668], [1668, 1441, 1497], [1533, 1182, 1291], [1576, 1236, 1331],
  [1412, 1083, 1176], [1760, 1139, 1723], [1990, 1296, 1353], [1535, 1064, 1533], [1682, 1329, 1379],
  [1477, 1124, 1169], [1292, 1127, 1276], [1314, 1178, 1225], [1284, 1153, 1274], [1304, 1185, 1237],
  [1248, 1191, 1218, 1224], [1372, 1213, 1313], [1425, 1303, 1390], [1502, 1361, 1450], [1500, 1379, 1449, 1456],
  [1518, 1409, 1441], [1473, 1385, 1389], [1397, 1315, 1360], [1554, 1349, 1515], [1534, 1303, 1311],
  [1562, 1311, 1463], [1539, 1191, 1376], [1568, 1353, 1520], [1699, 1458, 1482], [1516, 1315, 1398],
  [1844, 1288, 1747], [1981, 1717, 1816], [2187, 1816, 2163], [2479, 2037, 2413], [2515, 2344, 2386],
  [2504, 2365, 2406], [2485, 2366, 2461], [2461, 2320, 2343], [2443, 2343, 2435], [2427, 2384, 2399, 2386],
  [2451, 2359, 2420], [2466, 2385, 2427], [2521, 2386, 2407, 2433], [2410, 2285, 2314], [2351, 2259, 2307],
  [2446, 2223, 2406], [2659, 2405, 2569], [2624, 2495, 2533], [2725, 2461, 2620], [2733, 2303, 2571],
  [2589, 2241, 2283], [2532, 2267, 2376], [2454, 2121, 2188], [2396, 2188, 2306], [2577, 2248, 2540],
  [2752, 2452, 2521], [2588, 2240, 2494], [2494, 2211, 2409], [2598, 2366, 2554], [2597, 2412, 2526],
  [2594, 2412, 2494], [2571, 2443, 2568], [2633, 2519, 2595], [2620, 2571, 2608, 2571], [2684, 2589, 2665],
  [2716, 2620, 2620], [2665, 2528, 2605], [2641, 2533, 2578], [2606, 2486, 2519], [2550, 2427, 2436],
  [2459, 2366, 2394], [2436, 2307, 2347], [2408, 2196, 2212], [2391, 2147, 2387], [2388, 2117, 2163],
  [2234, 2045, 2178], [2204, 1800, 1800], [1835, 1586, 1825], [1831, 1638, 1788], [1955, 1715, 1888]
];

const days = ['10 Oct', '11 Oct', '12 Oct', '13 Oct', '14 Oct', '17 Oct', '18 Oct', '19 Oct'];
const times = ['7 Oct 2022', '7 Oct 22:00'];
days.forEach(day => ['06:00', '14:00', '22:00'].forEach(hour => times.push(day + ' ' + hour)));
times.length = 25;

const TOP = 2783;
const BOTTOM = 288;
const svg = document.getElementById('chart');

function add(tag, attrs, text) {
  const el = document.createElementNS('http://www.w3.org/2000/svg', tag);
  for (const key in attrs) el.setAttribute(key, attrs[key]);
  if (text) el.textContent = text;
  svg.appendChild(el);
}

function line(x1, y1, x2, y2, name) {
  add('line', { x1, y1, x2, y2, class: name, 'shape-rendering': 'crispEdges' });
}

function draw() {
  svg.innerHTML = '';
  const left = 3;
  const top = 2;
  const right = svg.clientWidth - 69;
  const bottom = svg.clientHeight - 26;
  const step = (right - left) / 195.5;
  const px = i => Math.round(left + i * step);
  const py = p => Math.round(top + (TOP - p) / (TOP - BOTTOM) * (bottom - top));

  for (let i = 4; i <= 192; i += 4) line(px(i), top, px(i), bottom, 'grid');
  for (let p = 2690; p > 400; p -= 120) {
    line(left, py(p), right, py(p), 'grid');
    line(right, py(p), right + 4, py(p), 'frame');
    add('text', { x: right + 5, y: py(p) + 5, class: 'axis-label' }, ((96000 + p) / 100000).toFixed(5));
  }
  times.forEach((label, n) => {
    line(px(n * 8), bottom, px(n * 8), bottom + 4, 'frame');
    add('text', { x: px(n * 8), y: bottom + 18, class: 'axis-label' }, label);
  });

  line(left, py(1888), right, py(1888), 'price-line');

  candles.forEach((c, i) => {
    const open = c[3] === undefined ? candles[i - 1][2] : c[3];
    const [high, low, close] = c;
    const x = px(i);
    const y = py(Math.max(open, close));
    const h = py(Math.min(open, close)) - y;
    const half = i === 0 ? 0 : 4;
    add('rect', { x: x - 1, y: py(high), width: 2, height: py(low) - py(high), class: 'wick' });
    add('rect', {
      x: x - half,
      y,
      width: half + 4,
      height: Math.max(h, 1),
      class: close > open ? 'bull' : 'bear',
      'shape-rendering': 'crispEdges'
    });
  });

  line(left, top, left, bottom, 'frame');
  line(left, top, right, top, 'frame');
  line(right, top, right, bottom, 'frame');
  line(left, bottom, right, bottom, 'frame');

  add('rect', { x: right + 2, y: py(1888) - 9, width: 57, height: 20, class: 'price-tag' });
  add('text', { x: right + 6, y: py(1888) + 6, class: 'price-tag-label' }, '0.97888');
}

draw();
window.addEventListener('resize', draw);
```
